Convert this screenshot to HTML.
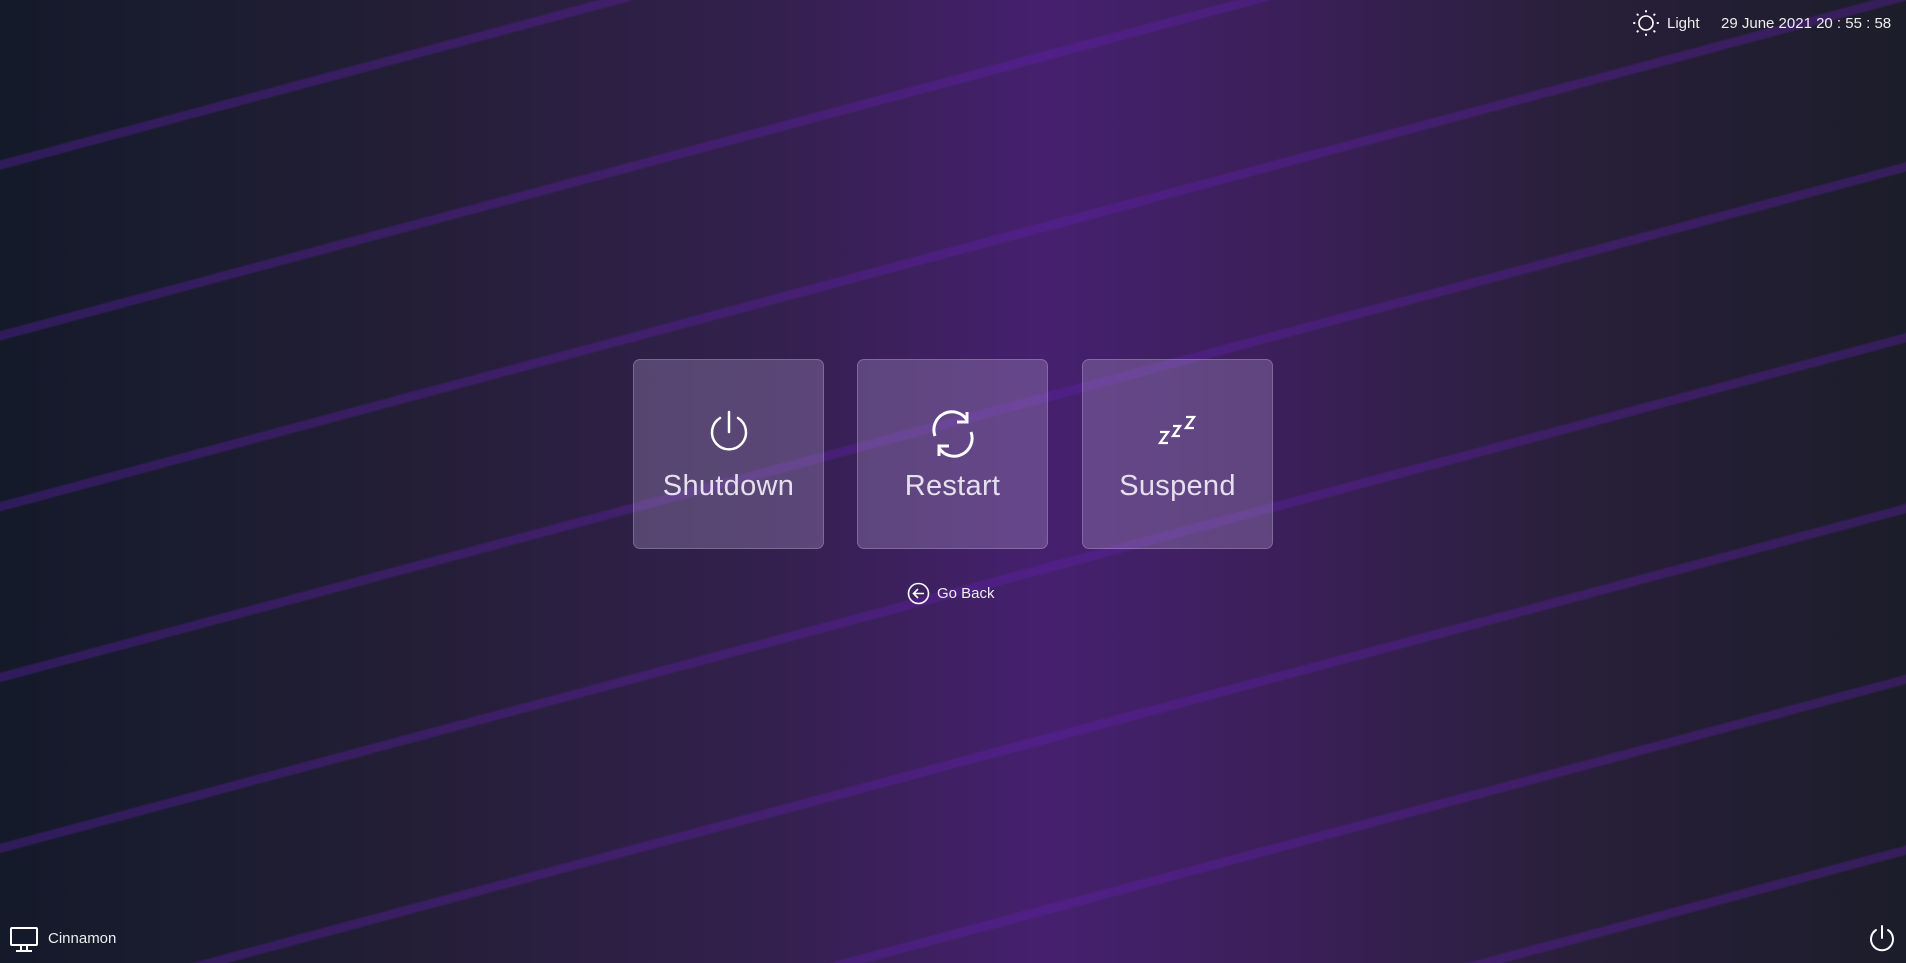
<!DOCTYPE html>
<html><head><meta charset="utf-8"><style>
html,body{margin:0;padding:0;width:1906px;height:963px;overflow:hidden;font-family:"Liberation Sans",sans-serif;color:#fff}
body{position:relative;background:linear-gradient(90deg,#141a2a 0%,#221e35 20%,#33204d 40%,#46206f 55%,#3a1f58 68%,#291f3b 82%,#1c1d2a 100%)}
.bricks{position:absolute;inset:0;background:repeating-linear-gradient(165deg,rgba(0,0,0,0) 0px,rgba(0,0,0,0) 154px,rgba(100,30,180,0.35) 156px,rgba(100,30,180,0.35) 163px,rgba(0,0,0,0) 165px)}
.btn{position:absolute;top:359px;width:189px;height:188px;border-radius:7px;background:rgba(170,150,200,0.33);border:1px solid rgba(255,255,255,0.2);text-align:center}
.btn .lbl{position:absolute;left:0;right:0;top:110px;font-size:29px;font-weight:300;color:#e6e0ee;letter-spacing:0.3px}
.btn svg{position:absolute;left:50%;top:48px;transform:translateX(-50%)}
.txt{position:absolute;font-size:15px;color:#eee}
</style></head><body>
<div class="bricks"></div>

<div class="btn" style="left:633px">
<svg width="44" height="48" viewBox="0 0 44 48" fill="none" stroke="#fff" stroke-width="2.5" stroke-linecap="round"><path d="M22 4v20"/><path d="M13 10a17 17 0 1 0 18 0"/></svg>
<div class="lbl">Shutdown</div></div>

<div class="btn" style="left:857px">
<svg width="52" height="52" viewBox="0 0 52 52" fill="none" stroke="#fff" stroke-width="3"><path d="M8 28a18 18 0 0 1 32-16"/><path d="M40 4v10h-10"/><path d="M44 24a18 18 0 0 1-32 16"/><path d="M12 48v-10h10"/></svg>
<div class="lbl">Restart</div></div>

<div class="btn" style="left:1082px">
<svg width="44" height="40" viewBox="0 0 44 40" fill="none" stroke="#fff" stroke-width="2.3"><path d="M4 24h8l-8 11h8"/><path d="M17 18h7l-7 10h7"/><path d="M30 9h8l-8 11h8"/></svg>
<div class="lbl">Suspend</div></div>

<svg style="position:absolute;left:907px;top:582px" width="23" height="23" viewBox="0 0 23 23" fill="none" stroke="#fff" stroke-width="1.6"><circle cx="11.5" cy="11.5" r="10"/><path d="M17 11.5H7M11 7l-4.5 4.5L11 16"/></svg>
<div class="txt" style="left:937px;top:585px">Go Back</div>

<svg style="position:absolute;left:1633px;top:10px" width="26" height="26" viewBox="0 0 26 26" fill="none" stroke="#fff" stroke-width="1.6"><circle cx="13" cy="13" r="7"/><g stroke-linecap="round" stroke-width="2"><path d="M13 1v.5M13 24.5v.5M1 13h.5M24.5 13h.5M4.5 4.5l.3.3M21.2 21.2l.3.3M4.5 21.5l.3-.3M21.2 4.8l.3-.3"/></g></svg>
<div class="txt" style="left:1667px;top:15px">Light</div>
<div class="txt" style="left:1721px;top:15px">29 June 2021 20 : 55 : 58</div>

<svg style="position:absolute;left:10px;top:927px" width="28" height="26" viewBox="0 0 28 26" fill="none" stroke="#fff" stroke-width="2"><rect x="1" y="1" width="26" height="17" rx="1"/><path d="M11 18v6M17 18v6M6 24h16"/></svg>
<div class="txt" style="left:48px;top:930px">Cinnamon</div>

<svg style="position:absolute;left:1867px;top:924px" width="30" height="30" viewBox="0 0 30 30" fill="none" stroke="#fff" stroke-width="2" stroke-linecap="round"><path d="M15 2v12"/><path d="M9 6a11 11 0 1 0 12 0"/></svg>
</body></html>
